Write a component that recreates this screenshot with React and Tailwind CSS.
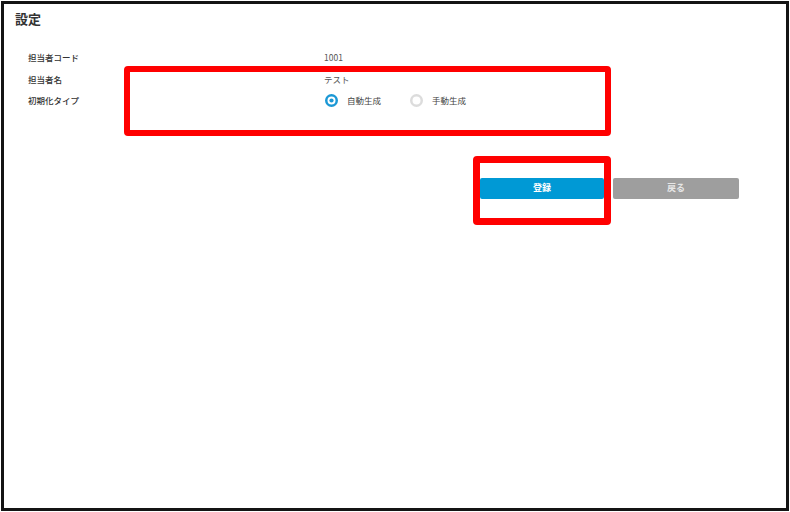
import React from "react";

function Radio({ checked, label }) {
  return (
    <div className="flex items-center gap-[9px]">
      <svg width="13" height="13" viewBox="0 0 13 13">
        <circle cx="6.5" cy="6.5" r="5.25" fill="white" stroke={checked ? "#1b98d5" : "#dcdcdc"} strokeWidth="2.5" />
        {checked && <circle cx="6.5" cy="6.5" r="2.1" fill="#1b98d5" />}
      </svg>
      <span className="text-[8.5px] text-[#444]">{label}</span>
    </div>
  );
}

export default function App() {
  return (
    <div
      className="w-[790px] h-[512px] bg-white relative overflow-hidden pl-[1px] pt-[1px]"
      style={{ fontFamily: '"Noto Sans CJK JP", "Noto Sans", sans-serif' }}
    >
      <div className="w-[788px] h-[510px] border-[3px] border-[#141414] bg-white flex flex-col">
        <div className="pl-[11px] pt-[7px] h-[30px] text-[13px] font-bold text-[#333] leading-[16px]">
          設定
        </div>
        <div className="pl-[24px] pt-[13px] flex flex-col">
          <div className="flex items-center h-[21.5px]">
            <div className="w-[296px] text-[8.5px] font-medium text-[#333]">担当者コード</div>
            <div className="text-[8.5px] text-[#555]">1001</div>
          </div>
          <div className="flex items-center h-[21.5px]">
            <div className="w-[296px] text-[8.5px] font-medium text-[#333]">担当者名</div>
            <div className="text-[8.5px] text-[#555]">テスト</div>
          </div>
          <div className="flex items-center h-[21.5px]">
            <div className="w-[297px] text-[8.5px] font-medium text-[#333]">初期化タイプ</div>
            <div className="flex items-center gap-[29px]">
              <Radio checked label="自動生成" />
              <Radio label="手動生成" />
            </div>
          </div>
        </div>
        <div className="flex pl-[476px] pt-[66px] gap-[9px]">
          <button className="w-[124px] h-[21px] bg-[#0099d5] text-white text-[9px] font-bold rounded-[2px]">
            登録
          </button>
          <button className="w-[126px] h-[21px] bg-[#9e9e9e] text-[#e6e6e6] text-[9px] font-bold rounded-[2px]">
            戻る
          </button>
        </div>
      </div>
      <div className="absolute left-[124px] top-[66px] w-[487px] h-[70px] border-[6px] border-[#ff0000] rounded-[4px]" />
      <div className="absolute left-[473px] top-[156px] w-[138px] h-[69px] border-[7px] border-[#ff0000] rounded-[4px]" />
    </div>
  );
}
